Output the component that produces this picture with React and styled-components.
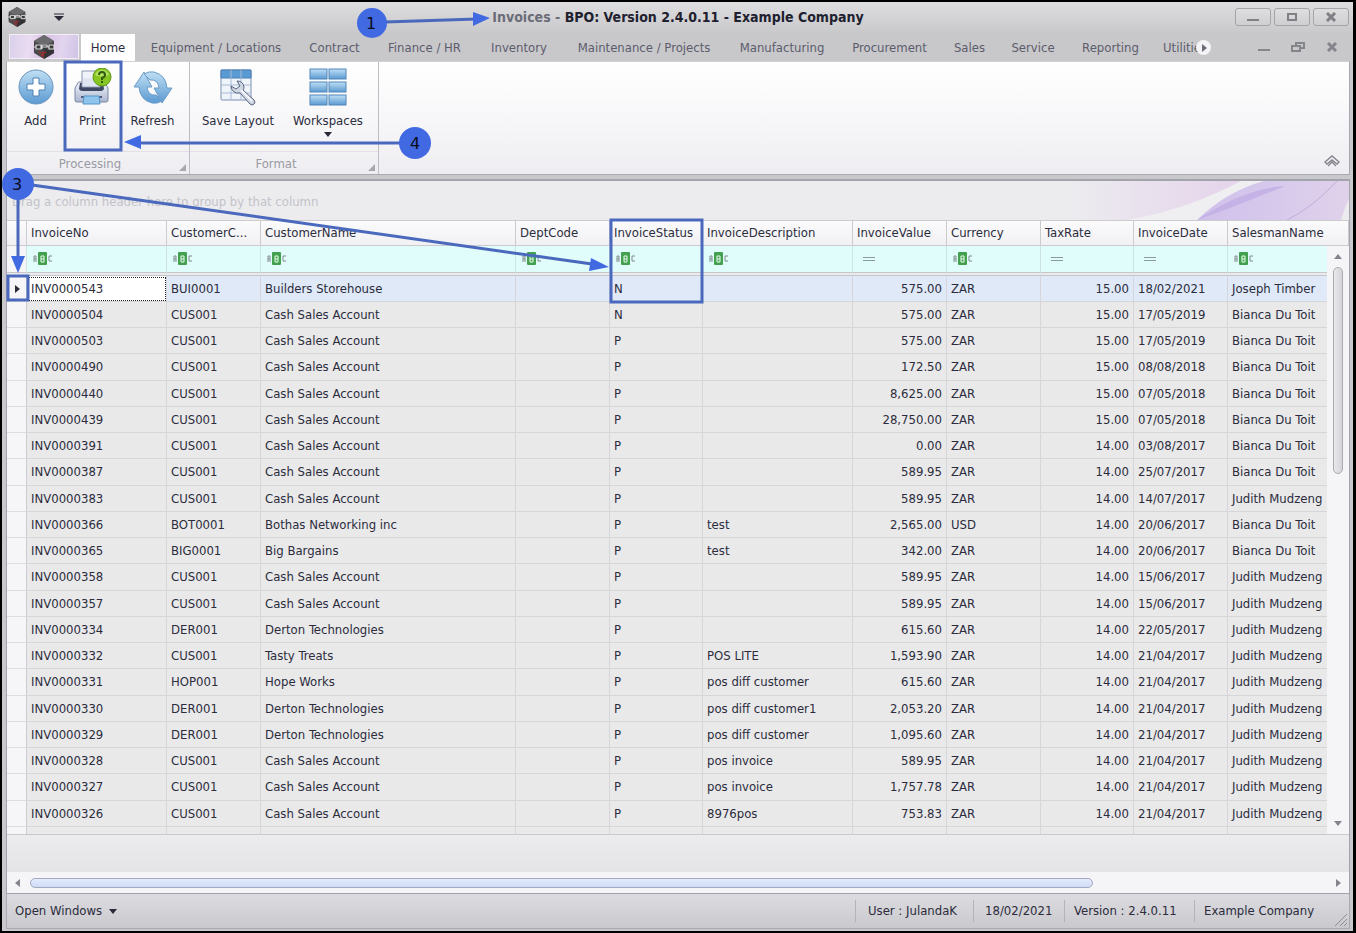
import React from 'react';
import styled, { createGlobalStyle } from 'styled-components';

const Global = createGlobalStyle`
  * { box-sizing: border-box; }
  html, body { margin: 0; height: 100%; }
  body { background: #000; font-family: "DejaVu Sans Condensed", "Noto Sans", sans-serif; font-size: 13px; line-height: 18px; color: #2c2c3c; }
  button { font: inherit; color: inherit; border: 0; padding: 0; background: none; }
`;

const Frame = styled.div`
  position: relative;
  height: 100vh;
  border: 2px solid #000;
  border-right-width: 3px;
  background: #c9c9cd;
  display: flex;
  flex-direction: column;
  overflow: hidden;
`;

const TitleBar = styled.header`
  height: 32px;
  flex: none;
  display: flex;
  align-items: center;
  padding: 0 4px 2px 5px;
  background: linear-gradient(#dedee0, #c8c8ca);
`;
const QuickArrow = styled.button`
  width: 20px;
  height: 20px;
  margin-left: 22px;
  display: grid;
  place-items: center;
`;
const Title = styled.h1`
  flex: 1;
  margin: 0;
  padding-left: 52px;
  text-align: center;
  font-size: 14px;
  line-height: 20px;
  font-weight: bold;
  color: #20202e;
  white-space: nowrap;
  span { color: #6c6c78; }
`;
const WindowButtons = styled.div`
  display: flex;
  gap: 3px;
`;
const WindowButton = styled.button`
  width: 36px;
  height: 18px;
  border: 1px solid #a4a4aa;
  border-radius: 3px;
  background: linear-gradient(#dededf, #cfcfd2);
  display: grid;
  place-items: center;
`;

const TabBar = styled.nav`
  height: 27px;
  flex: none;
  display: flex;
  align-items: stretch;
  padding: 0 6px 0 7px;
  background: #c8c8cb;
`;
const AppButton = styled.button`
  width: 70px;
  height: 25px;
  border: 1px solid #f3edf8;
  background: linear-gradient(100deg, #d9d0ea, #eadcf1 30%, #d9bfe4 50%, #e2d5ef 75%, #cfc3e6);
  display: grid;
  place-items: center;
  margin-right: 2px;
`;
const Tab = styled.a`
  flex: none;
  padding-top: 5px;
  margin-right: 2px;
  width: ${p => p.$w}px;
  text-align: center;
  white-space: nowrap;
  text-decoration: none;
  overflow: hidden;
  color: ${p => (p.$active ? '#2c2c3c' : '#5c5c6b')};
  background: ${p => (p.$active ? '#fff' : 'none')};
`;
const TabScroll = styled.button`
  width: 15px;
  height: 15px;
  margin: 6px 0 0 -22px;
  border-radius: 50%;
  background: #f4f4f6;
  display: grid;
  place-items: center;
  z-index: 1;
`;
const ChildButtons = styled.div`
  margin-left: auto;
  display: flex;
  gap: 14px;
  padding: 3px 5px 0 0;
  button { width: 20px; height: 20px; display: grid; place-items: center; }
`;

const Ribbon = styled.section`
  height: 114px;
  flex: none;
  margin: 0 3px 0 4px;
  border: 1px solid #a9a9b0;
  border-top-color: #d0d0d4;
  background: linear-gradient(#ffffff, #f8f8fa 45%, #eeeef2);
  display: flex;
`;
const Group = styled.div`
  position: relative;
  width: ${p => p.$w}px;
  border-right: 1px solid #bdbdc4;
  display: flex;
  flex-direction: column;
`;
const GroupTools = styled.div`
  flex: 1;
  display: flex;
  padding-left: ${p => p.$pad}px;
`;
const GroupName = styled.div`
  height: 23px;
  border-top: 1px solid #e0e0e5;
  text-align: center;
  line-height: 24px;
  color: #9a9aa3;
  padding-right: 16px;
  svg { position: absolute; right: 3px; bottom: 3px; }
`;
const Tool = styled.button`
  width: ${p => p.$w}px;
  display: flex;
  flex-direction: column;
  align-items: center;
  padding-top: 6px;
  white-space: nowrap;
  svg { flex: none; }
  span { margin-top: 6px; }
`;
const Collapse = styled.button`
  margin: auto 8px 2px auto;
  width: 18px;
  height: 18px;
`;

const Content = styled.main`
  flex: 1;
  min-height: 0;
  margin: 4px 3px 0 4px;
  border: 1px solid #a3a3ab;
  border-top-width: 2px;
  display: flex;
  flex-direction: column;
  background: #ebebed;
`;
const GroupPanel = styled.div`
  height: 39px;
  flex: none;
  display: flex;
  justify-content: space-between;
  padding-left: 5px;
  line-height: 41px;
  color: #c3c3c9;
  background: #ececef;
`;
const GridArea = styled.div`
  position: relative;
  flex: 1;
  min-height: 0;
  overflow: hidden;
  border-bottom: 1px solid #c9c9cd;
`;
const Table = styled.table`
  width: 100%;
  table-layout: fixed;
  border-collapse: separate;
  border-spacing: 0;
`;
const cell = `
  padding: 0 4px;
  text-align: left;
  font-weight: normal;
  white-space: nowrap;
  overflow: hidden;
`;
const HeadCell = styled.th`
  ${cell}
  height: 26px;
  text-overflow: ellipsis;
  border: solid #cbcbd0;
  border-width: 1px 1px 1px 0;
  background: linear-gradient(#fbfbfc, #f1f1f4);
`;
const FilterCell = styled.td`
  ${cell}
  height: 30px;
  padding: 0 5px;
  border-right: 1px solid #cfe2e2;
  border-bottom: 4px double #c6c6ca;
  background: ${p => (p.$blank ? '#f6f6f8' : '#e0fdfb')};
  background-clip: padding-box;
  svg { display: block; }
`;
const Row = styled.tr`
  height: 26px;
  &:nth-child(4n) { height: 27px; }
  background: ${p => (p.$selected ? '#dfe9f8' : '#e9e9ea')};
`;
const Cell = styled.td`
  ${cell}
  text-align: ${p => (p.$right ? 'right' : 'left')};
  border-right: 1px solid #d6d6da;
  border-bottom: 1px solid #d6d6da;
  ${p => p.$focus && 'background: #fff; outline: 1px dotted #222; outline-offset: -2px;'}
`;
const Indicator = styled.td`
  padding: 0 0 0 6px;
  background: #f6f6f8;
  border-right: 1px solid #cbcbd0;
  border-bottom: 1px solid #dedee2;
  svg { display: block; }
`;
const VScroll = styled.div`
  position: absolute;
  top: 26px;
  right: 0;
  bottom: 0;
  width: 22px;
  padding: 7px 0;
  background: #f5f5f8;
  display: flex;
  flex-direction: column;
  align-items: center;
  justify-content: space-between;
  gap: 6px;
`;
const VTrack = styled.div`
  flex: 1;
  width: 10px;
`;
const VThumb = styled.div`
  height: 38%;
  border: 1px solid #a9a9b0;
  border-radius: 5px;
  background: linear-gradient(90deg, #e9e9ec, #d4d4d8);
`;
const Summary = styled.div`
  height: 37px;
  flex: none;
  background: linear-gradient(#ececee, #e4e4e7);
`;
const HScroll = styled.div`
  height: 21px;
  flex: none;
  background: #f5f5f8;
  display: flex;
  align-items: center;
  gap: 8px;
  padding: 0 7px;
`;
const HTrack = styled.div`
  flex: 1;
  height: 10px;
`;
const HThumb = styled.div`
  width: 82%;
  height: 10px;
  border: 1px solid #a3a9bf;
  border-radius: 5px;
  background: linear-gradient(#e3ebfc, #cfdbf6);
`;

const StatusBar = styled.footer`
  height: 35px;
  flex: none;
  margin: 0 3px 2px 4px;
  border: 1px solid #a9a9b0;
  border-top: 0;
  display: flex;
  align-items: center;
  padding-left: 8px;
  background: linear-gradient(#dcdce0, #c9c9ce);
`;
const OpenWindows = styled.button`
  margin-right: auto;
  display: flex;
  align-items: center;
  gap: 7px;
`;
const StatusItem = styled.span`
  width: ${p => p.$w}px;
  line-height: 22px;
  padding-left: ${p => p.$pad || 9}px;
  border-left: 1px solid #b3b3b9;
  white-space: nowrap;
`;
const Grip = styled.svg`
  align-self: flex-end;
`;
const Callouts = styled.svg`
  position: absolute;
  left: -2px;
  top: -2px;
  width: 720px;
  height: 320px;
  pointer-events: none;
  font-family: "DejaVu Sans", sans-serif;
  font-size: 16px;
`;

const Triangle = ({ dir = 'down', size = 8, color = '#2a2a3a' }) => {
  const shape = { down: 'M0 2h8L4 7z', up: 'M0 6h8L4 1z', left: 'M6 0v8L1 4z', right: 'M2 0v8l5-4z' }[dir];
  return <svg width={size} height={size} viewBox="0 0 8 8"><path d={shape} fill={color} /></svg>;
};

const Logo = ({ size }) => (
  <svg width={size} height={size} viewBox="0 0 24 24">
    <path d="M12 0l10 6v12l-10 6L2 18V6z" fill="#4b4a4c" />
    <path d="M12 0l10 6-10 5L2 6z" fill="#6b6a6c" />
    <path d="M12 15l10-2v5l-10 6z" fill="#343335" />
    <path d="M2 9h20v6H2z" fill="#3a393b" />
    <path d="M1 12h3M9 12h2M15 12h2M4 10h5v4H4zM10 14v-4h5v2h-5M17 10h5v4h-5z" stroke="#dcdcdc" strokeWidth="1.2" fill="none" />
    <path d="M7 17l2 1M11 17v4l-2-1M12 18l2-1" stroke="#a52a2a" strokeWidth="1.6" fill="none" />
  </svg>
);

const AddIcon = () => (
  <svg width="38" height="38" viewBox="0 0 38 38">
    <defs><linearGradient id="blue" x1="0" y1="0" x2="0" y2="1"><stop offset="0" stopColor="#c0dff4" /><stop offset="1" stopColor="#5b9ad2" /></linearGradient></defs>
    <circle cx="19" cy="19" r="17" fill="url(#blue)" stroke="#6a93bd" />
    <path d="M16 10h6v6h6v6h-6v6h-6v-6h-6v-6h6z" fill="#fff" stroke="#4f80b3" strokeLinejoin="round" />
  </svg>
);
const PrintIcon = () => (
  <svg width="38" height="38" viewBox="0 0 38 38">
    <defs><linearGradient id="tray" x1="0" y1="0" x2="0" y2="1"><stop offset="0" stopColor="#f3f5fb" /><stop offset="1" stopColor="#a9b5cf" /></linearGradient></defs>
    <path d="M4 15q0-1 1-1h25q1 0 1 1l3 5v12q0 2-2 2H3q-2 0-2-2V20z" fill="url(#tray)" stroke="#7b86a3" />
    <path d="M6 15h23l1 6q-1 2-3 2H8q-2 0-3-2z" fill="#3f4862" />
    <path d="M8 3h18v16H8z" fill="#f1f3fa" stroke="#8c96b0" />
    <path d="M9 10h16v8H9z" fill="#dfe5f3" />
    <path d="M7 28h21v2H7z" fill="#4d5a7a" />
    <path d="M10 28h15l1 8H9z" fill="#8fc5ec" stroke="#5793c4" />
    <circle cx="28" cy="9" r="9" fill="#86c522" stroke="#5b9913" />
    <path d="M21 7q2-5 7-5t7 5q-7 3-14 0z" fill="#b2df62" />
    <path d="M25 7q0-3 3-3t3 3q0 2-3 3v2M28 13v2" fill="none" stroke="#315b0c" strokeWidth="2" />
  </svg>
);
const RefreshIcon = () => (
  <svg width="40" height="38" viewBox="0 0 40 38">
    <g fill="url(#blue)" stroke="#6c9cc7" strokeLinejoin="round">
      <path d="M11 4L1 19h5q1 13 13 16 5 1 10-2l-6-6q-8 1-9-8h5z" />
      <path d="M29 35l10-15h-5Q33 7 21 4q-5-1-10 2l6 6q8-1 9 8h-5z" />
    </g>
  </svg>
);
const LayoutIcon = () => (
  <svg width="38" height="38" viewBox="0 0 38 38">
    <rect x="2" y="2" width="30" height="30" rx="1" fill="#eff4fb" stroke="#7b8fb0" />
    <path d="M2 2h30v8H2z" fill="#5b9bd3" stroke="#4a7fb4" />
    <path d="M12 2v30M22 2v30M2 17h30M2 25h30" stroke="#a9bbd6" />
    <path d="M18 13q6 0 7 6 0 2-1 3l11 10q2 2 0 4t-4 0L21 25q-8 1-9-7l5 3 4-3z" fill="#cfd6e4" stroke="#59657f" strokeLinejoin="round" />
    <path d="M22 22l11 11" stroke="#f3f5fa" strokeWidth="2" />
  </svg>
);
const WorkspacesIcon = () => (
  <svg width="38" height="38" viewBox="0 0 38 38">
    {[1, 14, 27].map(y => [1, 20].map(x => (
      <rect key={x + '-' + y} x={x} y={y} width="17" height="10" fill="url(#blue)" stroke="#4f86ba" />
    )))}
  </svg>
);
const AbcIcon = () => (
  <svg width="22" height="16" viewBox="0 0 22 16">
    <rect x="6" y="1" width="9" height="13" rx="1" fill="#43a04f" />
    <path d="M2 11V5h2v6M2 8h2M20 5h-3v5h3" fill="none" stroke="#808a8a" />
    <path d="M9 5h3v6H9zM9 8h3" fill="none" stroke="#e9ffee" />
  </svg>
);
const EqIcon = () => (
  <svg width="22" height="16" viewBox="0 0 22 16"><path d="M5 6.500h12M5 9.500h12" stroke="#8b9a9e" /></svg>
);

const TABS = [
  ['Home', 54], ['Equipment / Locations', 158], ['Contract', 75], ['Finance / HR', 101], ['Inventory', 84],
  ['Maintenance / Projects', 162], ['Manufacturing', 110], ['Procurement', 101], ['Sales', 55],
  ['Service', 68], ['Reporting', 83], ['Utilities', 62],
];

const COLUMNS = [
  ['InvoiceNo', 140], ['CustomerCode', 94], ['CustomerName', 255], ['DeptCode', 94], ['InvoiceStatus', 93],
  ['InvoiceDescription', 150], ['InvoiceValue', 94], ['Currency', 94], ['TaxRate', 93], ['InvoiceDate', 94], ['SalesmanName', null],
];

const CASH = 'Cash Sales Account';
const BIANCA = 'Bianca Du Toit';
const JUDITH = 'Judith Mudzeng';
const ROWS = [
  ['INV0000543', 'BUI0001', 'Builders Storehouse', '', 'N', '', '575.00', 'ZAR', '15.00', '18/02/2021', 'Joseph Timber'],
  ['INV0000504', 'CUS001', CASH, '', 'N', '', '575.00', 'ZAR', '15.00', '17/05/2019', BIANCA],
  ['INV0000503', 'CUS001', CASH, '', 'P', '', '575.00', 'ZAR', '15.00', '17/05/2019', BIANCA],
  ['INV0000490', 'CUS001', CASH, '', 'P', '', '172.50', 'ZAR', '15.00', '08/08/2018', BIANCA],
  ['INV0000440', 'CUS001', CASH, '', 'P', '', '8,625.00', 'ZAR', '15.00', '07/05/2018', BIANCA],
  ['INV0000439', 'CUS001', CASH, '', 'P', '', '28,750.00', 'ZAR', '15.00', '07/05/2018', BIANCA],
  ['INV0000391', 'CUS001', CASH, '', 'P', '', '0.00', 'ZAR', '14.00', '03/08/2017', BIANCA],
  ['INV0000387', 'CUS001', CASH, '', 'P', '', '589.95', 'ZAR', '14.00', '25/07/2017', BIANCA],
  ['INV0000383', 'CUS001', CASH, '', 'P', '', '589.95', 'ZAR', '14.00', '14/07/2017', JUDITH],
  ['INV0000366', 'BOT0001', 'Bothas Networking inc', '', 'P', 'test', '2,565.00', 'USD', '14.00', '20/06/2017', BIANCA],
  ['INV0000365', 'BIG0001', 'Big Bargains', '', 'P', 'test', '342.00', 'ZAR', '14.00', '20/06/2017', BIANCA],
  ['INV0000358', 'CUS001', CASH, '', 'P', '', '589.95', 'ZAR', '14.00', '15/06/2017', JUDITH],
  ['INV0000357', 'CUS001', CASH, '', 'P', '', '589.95', 'ZAR', '14.00', '15/06/2017', JUDITH],
  ['INV0000334', 'DER001', 'Derton Technologies', '', 'P', '', '615.60', 'ZAR', '14.00', '22/05/2017', JUDITH],
  ['INV0000332', 'CUS001', 'Tasty Treats', '', 'P', 'POS LITE', '1,593.90', 'ZAR', '14.00', '21/04/2017', JUDITH],
  ['INV0000331', 'HOP001', 'Hope Works', '', 'P', 'pos diff customer', '615.60', 'ZAR', '14.00', '21/04/2017', JUDITH],
  ['INV0000330', 'DER001', 'Derton Technologies', '', 'P', 'pos diff customer1', '2,053.20', 'ZAR', '14.00', '21/04/2017', JUDITH],
  ['INV0000329', 'DER001', 'Derton Technologies', '', 'P', 'pos diff customer', '1,095.60', 'ZAR', '14.00', '21/04/2017', JUDITH],
  ['INV0000328', 'CUS001', CASH, '', 'P', 'pos invoice', '589.95', 'ZAR', '14.00', '21/04/2017', JUDITH],
  ['INV0000327', 'CUS001', CASH, '', 'P', 'pos invoice', '1,757.78', 'ZAR', '14.00', '21/04/2017', JUDITH],
  ['INV0000326', 'CUS001', CASH, '', 'P', '8976pos', '753.83', 'ZAR', '14.00', '21/04/2017', JUDITH],
  ['', '', '', '', '', '', '', '', '', '', ''],
];

const NUMERIC = [6, 8];
const EQUALS = [6, 8, 9];

export default function App() {
  return (
    <Frame>
      <Global />
      <TitleBar>
        <Logo size={20} />
        <QuickArrow aria-label="Customize quick access">
          <svg width="10" height="8"><path d="M0 1h10" stroke="#2a2a3a" /><path d="M0 3h10L5 8z" fill="#2a2a3a" /></svg>
        </QuickArrow>
        <Title><span>Invoices - </span>BPO: Version 2.4.0.11 - Example Company</Title>
        <WindowButtons>
          <WindowButton aria-label="Minimize"><svg width="12" height="10"><path d="M0 8h12" stroke="#808086" strokeWidth="2" /></svg></WindowButton>
          <WindowButton aria-label="Maximize"><svg width="12" height="10"><rect x="2" y="2" width="8" height="6" fill="none" stroke="#808086" strokeWidth="2" /></svg></WindowButton>
          <WindowButton aria-label="Close"><svg width="12" height="10"><path d="M2 1l8 8M10 1L2 9" stroke="#808086" strokeWidth="3" /></svg></WindowButton>
        </WindowButtons>
      </TitleBar>
      <TabBar>
        <AppButton aria-label="Application menu"><Logo size={24} /></AppButton>
        {TABS.map(([name, w], i) => <Tab key={name} href="#" $w={w} $active={i === 0}>{name}</Tab>)}
        <TabScroll aria-label="More tabs"><Triangle dir="right" color="#6c6c76" /></TabScroll>
        <ChildButtons>
          <button aria-label="Minimize child"><svg width="12" height="10"><path d="M0 8h12" stroke="#85858c" strokeWidth="2" /></svg></button>
          <button aria-label="Restore child"><svg width="14" height="12"><path d="M5 4V2h8v5h-3M1 5h8v5H1z" fill="none" stroke="#85858c" strokeWidth="2" /></svg></button>
          <button aria-label="Close child"><svg width="12" height="10"><path d="M2 1l8 8M10 1L2 9" stroke="#85858c" strokeWidth="3" /></svg></button>
        </ChildButtons>
      </TabBar>
      <Ribbon>
        <Group $w={183}>
          <GroupTools $pad={0}>
            <Tool $w={57}><AddIcon /><span>Add</span></Tool>
            <Tool $w={57}><PrintIcon /><span>Print</span></Tool>
            <Tool $w={63}><RefreshIcon /><span>Refresh</span></Tool>
          </GroupTools>
          <GroupName>Processing<svg width="7" height="7"><path d="M7 0v7H0z" fill="#a7a7ae" /></svg></GroupName>
        </Group>
        <Group $w={189}>
          <GroupTools $pad={2}>
            <Tool $w={92}><LayoutIcon /><span>Save Layout</span></Tool>
            <Tool $w={88}><WorkspacesIcon /><span>Workspaces</span><Triangle /></Tool>
          </GroupTools>
          <GroupName>Format<svg width="7" height="7"><path d="M7 0v7H0z" fill="#a7a7ae" /></svg></GroupName>
        </Group>
        <Collapse aria-label="Collapse ribbon">
          <svg width="18" height="14"><path d="M2 8l7-6 7 6-2 2-5-4-5 4zM5 12l4-4 4 4" fill="none" stroke="#85858d" strokeWidth="1.400" /></svg>
        </Collapse>
      </Ribbon>
      <Content>
        <GroupPanel>
          Drag a column header here to group by that column
          <svg width="280" height="39" viewBox="0 0 280 39">
            <defs>
              <linearGradient id="pink" x1="0" x2="1"><stop offset="0" stopColor="#ececef" /><stop offset="1" stopColor="#e3cdea" /></linearGradient>
              <linearGradient id="violet" x1="0" x2="1"><stop offset="0" stopColor="#cfc0ea" /><stop offset=".5" stopColor="#d6c9ec" /><stop offset="1" stopColor="#e0d2ea" /></linearGradient>
            </defs>
            <path d="M0 39h60Q120 28 172 0H0z" fill="url(#pink)" opacity=".8" />
            <path d="M60 39Q120 28 172 0h24Q150 18 128 39z" fill="#efeff2" />
            <path d="M128 39Q158 10 195 0h85v18q-5 10-8 21z" fill="url(#violet)" />
            <path d="M128 39q40-14 88-34-40 2-88 34z" fill="#bfaae4" opacity=".7" />
            <path d="M218 39q25-12 50-39" stroke="#c3abdc" fill="none" />
          </svg>
        </GroupPanel>
        <GridArea>
          <Table>
            <colgroup>
              <col style={{ width: 20 }} />
              {COLUMNS.map(([name, w]) => <col key={name} style={w ? { width: w } : undefined} />)}
            </colgroup>
            <thead>
              <tr>
                <HeadCell aria-label="Row indicator" />
                {COLUMNS.map(([name]) => <HeadCell key={name} scope="col">{name === 'CustomerCode' ? 'CustomerC...' : name}</HeadCell>)}
              </tr>
              <tr>
                <FilterCell $blank />
                {COLUMNS.map(([name], i) => <FilterCell key={name}>{EQUALS.includes(i) ? <EqIcon /> : <AbcIcon />}</FilterCell>)}
              </tr>
            </thead>
            <tbody>
              {ROWS.map((row, r) => (
                <Row key={r} $selected={r === 0}>
                  <Indicator>{r === 0 && <Triangle dir="right" />}</Indicator>
                  {row.map((text, i) => <Cell key={i} $right={NUMERIC.includes(i)} $focus={r === 0 && i === 0}>{text}</Cell>)}
                </Row>
              ))}
            </tbody>
          </Table>
          <VScroll>
            <Triangle dir="up" color="#85858d" />
            <VTrack><VThumb /></VTrack>
            <Triangle color="#85858d" />
          </VScroll>
        </GridArea>
        <Summary />
        <HScroll>
          <Triangle dir="left" color="#85858d" />
          <HTrack><HThumb /></HTrack>
          <Triangle dir="right" color="#85858d" />
        </HScroll>
      </Content>
      <StatusBar>
        <OpenWindows>Open Windows<Triangle /></OpenWindows>
        <StatusItem $w={118} $pad={12}>User : JulandaK</StatusItem>
        <StatusItem $w={91} $pad={11}>18/02/2021</StatusItem>
        <StatusItem $w={130}>Version : 2.4.0.11</StatusItem>
        <StatusItem $w={137}>Example Company</StatusItem>
        <Grip width="18" height="18"><path d="M4 16L16 4M9 16l7-7M13 16l3-3" stroke="#8d8d95" /></Grip>
      </StatusBar>
      <Callouts>
        <g fill="none" stroke="#4a69bd" strokeWidth="3">
          <path d="M385 22l92-3M400 143H140M18 198v60M32 185l560 79" />
          <rect x="65" y="62" width="56" height="88" />
          <rect x="611" y="220" width="91" height="82" />
          <rect x="8" y="276" width="20" height="24" />
        </g>
        <g fill="#4169e1">
          <path d="M473 12v14l17-8zM124 142l17-7v14zM11 256h14l-7 17zM591 258l-2 13 20-4z" />
          <circle cx="372" cy="23" r="15" />
          <circle cx="415" cy="143" r="16" />
          <circle cx="18" cy="184" r="16" />
        </g>
        <g fill="#0c0c1c" textAnchor="middle">
          <text x="371" y="29">1</text>
          <text x="415" y="149">4</text>
          <text x="17" y="190">3</text>
        </g>
      </Callouts>
    </Frame>
  );
}
